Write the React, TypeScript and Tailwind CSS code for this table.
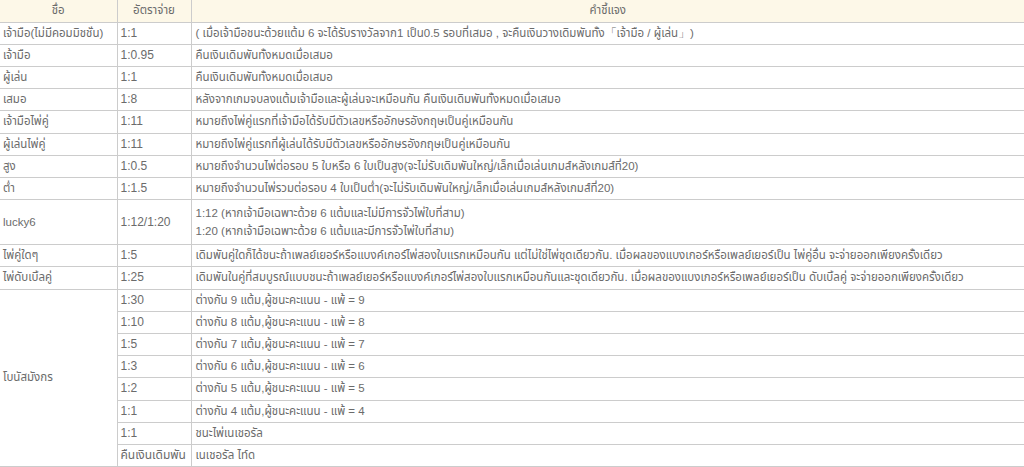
import React from "react";

type Row = { name?: string; rate: string; desc: React.ReactNode; span?: number; tall?: boolean };

const rows: Row[] = [
  { name: "เจ้ามือ(ไม่มีคอมมิชชั่น)", rate: "1:1", desc: "( เมื่อเจ้ามือชนะด้วยแต้ม 6 จะได้รับรางวัลจาก1 เป็น0.5 รอบที่เสมอ , จะคืนเงินวางเดิมพันทั้ง「เจ้ามือ / ผู้เล่น」)" },
  { name: "เจ้ามือ", rate: "1:0.95", desc: "คืนเงินเดิมพันทั้งหมดเมื่อเสมอ" },
  { name: "ผู้เล่น", rate: "1:1", desc: "คืนเงินเดิมพันทั้งหมดเมื่อเสมอ" },
  { name: "เสมอ", rate: "1:8", desc: "หลังจากเกมจบลงแต้มเจ้ามือและผู้เล่นจะเหมือนกัน คืนเงินเดิมพันทั้งหมดเมื่อเสมอ" },
  { name: "เจ้ามือไพ่คู่", rate: "1:11", desc: "หมายถึงไพ่คู่แรกที่เจ้ามือได้รับมีตัวเลขหรืออักษรอังกฤษเป็นคู่เหมือนกัน" },
  { name: "ผู้เล่นไพ่คู่", rate: "1:11", desc: "หมายถึงไพ่คู่แรกที่ผู้เล่นได้รับมีตัวเลขหรืออักษรอังกฤษเป็นคู่เหมือนกัน" },
  { name: "สูง", rate: "1:0.5", desc: "หมายถึงจำนวนไพ่ต่อรอบ 5 ใบหรือ 6 ใบเป็นสูง(จะไม่รับเดิมพันใหญ่/เล็กเมื่อเล่นเกมส์หลังเกมส์ที่20)" },
  { name: "ต่ำ", rate: "1:1.5", desc: "หมายถึงจำนวนไพ่รวมต่อรอบ 4 ใบเป็นต่ำ(จะไม่รับเดิมพันใหญ่/เล็กเมื่อเล่นเกมส์หลังเกมส์ที่20)" },
  {
    name: "lucky6",
    rate: "1:12/1:20",
    tall: true,
    desc: (
      <>
        1:12 (หากเจ้ามือเฉพาะด้วย 6 แต้มและไม่มีการจั่วไพ่ใบที่สาม)
        <br />
        1:20 (หากเจ้ามือเฉพาะด้วย 6 แต้มและมีการจั่วไพ่ใบที่สาม)
      </>
    ),
  },
  { name: "ไพ่คู่ใดๆ", rate: "1:5", desc: "เดิมพันคู่ใดก็ได้ชนะถ้าเพลย์เยอร์หรือแบงค์เกอร์ไพ่สองใบแรกเหมือนกัน แต่ไม่ใช่ไพ่ชุดเดียวกัน. เมื่อผลของแบงเกอร์หรือเพลย์เยอร์เป็น ไพ่คู่อื่น จะจ่ายออกเพียงครั้งเดียว" },
  { name: "ไพ่ดับเบิ้ลคู่", rate: "1:25", desc: "เดิมพันในคู่ที่สมบูรณ์แบบชนะถ้าเพลย์เยอร์หรือแบงค์เกอร์ไพ่สองใบแรกเหมือนกันและชุดเดียวกัน. เมื่อผลของแบงเกอร์หรือเพลย์เยอร์เป็น ดับเบิ้ลคู่ จะจ่ายออกเพียงครั้งเดียว" },
  { name: "โบนัสมังกร", span: 8, rate: "1:30", desc: "ต่างกัน 9 แต้ม,ผู้ชนะคะแนน - แพ้ = 9" },
  { rate: "1:10", desc: "ต่างกัน 8 แต้ม,ผู้ชนะคะแนน - แพ้ = 8" },
  { rate: "1:5", desc: "ต่างกัน 7 แต้ม,ผู้ชนะคะแนน - แพ้ = 7" },
  { rate: "1:3", desc: "ต่างกัน 6 แต้ม,ผู้ชนะคะแนน - แพ้ = 6" },
  { rate: "1:2", desc: "ต่างกัน 5 แต้ม,ผู้ชนะคะแนน - แพ้ = 5" },
  { rate: "1:1", desc: "ต่างกัน 4 แต้ม,ผู้ชนะคะแนน - แพ้ = 4" },
  { rate: "1:1", desc: "ชนะไพ่เนเชอรัล" },
  { rate: "คืนเงินเดิมพัน", desc: "เนเชอรัล ไท์ด" },
];

export default function App() {
  return (
    <div className="w-[1024px] h-[467px] overflow-hidden bg-white font-['Liberation_Sans','Noto_Sans_Thai',Arial,sans-serif] text-[11.5px] text-[#6b6b6b]">
      <table className="w-[1025px] border-collapse table-fixed">
        <colgroup>
          <col className="w-[117px]" />
          <col className="w-[74px]" />
          <col />
        </colgroup>
        <thead>
          <tr className="bg-[#fdf8e8]">
            <th className="border border-[#ccc] border-l-0 border-t-0 py-[2px] leading-[17.5px] font-normal text-center">ชื่อ</th>
            <th className="border border-[#ccc] border-t-0 py-[2px] leading-[17.5px] font-normal text-center">อัตราจ่าย</th>
            <th className="border border-[#ccc] border-t-0 py-[2px] leading-[17.5px] font-normal text-center">คำชี้แจง</th>
          </tr>
        </thead>
        <tbody>
          {rows.map((r, i) => {
            const pad = r.tall ? "py-[4px] leading-[18px]" : "py-[2px] leading-[17.2px]";
            return (
              <tr key={i}>
                {r.name !== undefined && (
                  <td rowSpan={r.span} className={`border border-[#ccc] border-l-0 px-[3px] align-middle whitespace-nowrap ${pad}`}>
                    {r.name}
                  </td>
                )}
                <td className={`border border-[#ccc] px-[3px] align-middle whitespace-nowrap text-[12px] ${pad}`}>{r.rate}</td>
                <td className={`border border-[#ccc] px-[4px] align-middle whitespace-nowrap ${pad}`}>{r.desc}</td>
              </tr>
            );
          })}
        </tbody>
      </table>
    </div>
  );
}
